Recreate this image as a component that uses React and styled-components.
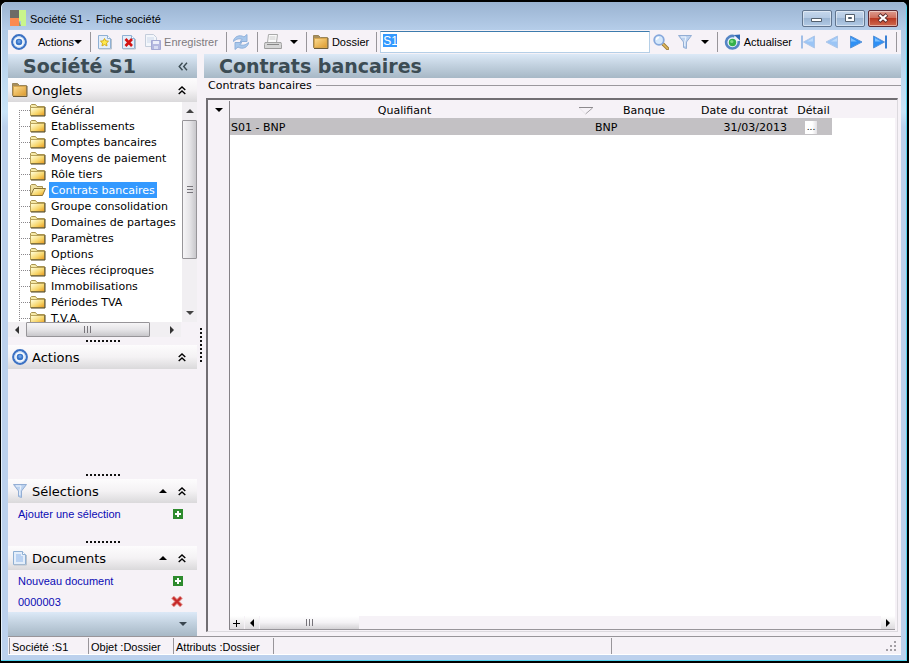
import { useState } from "react";
import styled, { createGlobalStyle } from "styled-components";

const GlobalStyle = createGlobalStyle`
    * {
        box-sizing: border-box;
    }

    body {
        margin: 0;
        background: #000;
        font-family: "Liberation Sans", Arial, sans-serif;
        font-size: 11px;
        color: #000;
    }

    button {
        margin: 0;
        padding: 0;
        border: 0;
        background: none;
        font: inherit;
        color: inherit;
    }

    svg {
        display: block;
        flex: none;
    }
`

const verdana = `"DejaVu Sans", Verdana, sans-serif`;

const tabs = [
    "Général",
    "Etablissements",
    "Comptes bancaires",
    "Moyens de paiement",
    "Rôle tiers",
    "Contrats bancaires",
    "Groupe consolidation",
    "Domaines de partages",
    "Paramètres",
    "Options",
    "Pièces réciproques",
    "Immobilisations",
    "Périodes TVA",
    "T.V.A.",
];

const contracts = [
    { label: "S01 - BNP", bank: "BNP", date: "31/03/2013" },
];

/* icons */

const AppIcon = () => (
    <svg width="17" height="17" viewBox="0 0 17 17">
        <path d="M0 0h9v8H0z" fill="#6d6b66" />
        <path d="M0 8h9v8H0z" fill="#fb8a4e" />
        <path d="M9 0h7v16h-5V11H9z" fill="#c9f58c" />
        <path d="M9 11l2 5H9z" fill="#8a9a70" />
    </svg>
);

const TargetIcon = () => (
    <svg width="16" height="16" viewBox="0 0 16 16">
        <circle cx="8" cy="8" r="6.800" fill="#fff" stroke="#3c72c4" strokeWidth="2.200" />
        <circle cx="8" cy="8" r="5.200" fill="none" stroke="#c4dbf5" />
        <circle cx="8" cy="8" r="3.300" fill="#3a76c8" />
        <circle cx="8" cy="7.400" r="1.600" fill="#6a9fe4" />
    </svg>
);

const FolderIcon = () => (
    <svg width="16" height="16" viewBox="0 0 16 16">
        <defs>
            <linearGradient id="folder" x1="0" y1="0" x2="1" y2="1">
                <stop offset="0" stopColor="#fbdc92" />
                <stop offset="1" stopColor="#dd9a2c" />
            </linearGradient>
        </defs>
        <path d="M.500 1.500h5l2 2h7v10H.500z" fill="#a98f5c" stroke="#9a8558" />
        <path d="M1.500 4.500h12.500v9H1.500z" fill="url(#folder)" stroke="#d9a850" />
        <path d="M15 4v10.500H1" fill="none" stroke="#6c5c3a" />
    </svg>
);

const TreeFolder = () => (
    <svg width="16" height="16" viewBox="0 0 16 16">
        <defs>
            <linearGradient id="tree" x1="0" y1="0" x2="1" y2="1">
                <stop offset="0.1" stopColor="#fffbd0" />
                <stop offset="0.6" stopColor="#f6d468" />
                <stop offset="1" stopColor="#e8961c" />
            </linearGradient>
        </defs>
        <path d="M.500 3.500l1-1h4l1.500 2h7.500v9H.500z" fill="#f5e9a8" stroke="#a8934f" />
        <path d="M.500 5.500h14v8H.500z" fill="url(#tree)" stroke="#b8a25a" />
        <path d="M15 5v9H1" fill="none" stroke="#4e421f" />
    </svg>
);

const TreeFolderOpen = () => (
    <svg width="16" height="16" viewBox="0 0 16 16">
        <path d="M.500 13.500v-10l1-1h4l1.500 2h5.500v3" fill="#efe0a0" stroke="#a8934f" />
        <path d="M.700 13.500L4 6.500h11.500l-3 7z" fill="url(#tree)" stroke="#8c7434" />
    </svg>
);

const PageShape = () => (
    <g transform="translate(1 0)">
        <path d="M.500 1.500h9l3 3v10H.500z" fill="#e4eefa" stroke="#8fb0d4" />
        <path d="M9.500 1.500v3h3" fill="#fff" stroke="#8fb0d4" />
        <path d="M1 15h12.500V5" fill="none" stroke="#b9c2cc" />
    </g>
);

const NewIcon = () => (
    <svg width="16" height="16" viewBox="0 0 16 16">
        <PageShape />
        <path d="M7.500 4.500l1.200 2.300 2.800.400-2 1.900.500 2.800-2.500-1.300L5 11.900l.500-2.800-2-1.900 2.800-.400z" fill="#ffe94a" stroke="#d3ab1c" />
    </svg>
);

const DeleteIcon = () => (
    <svg width="16" height="16" viewBox="0 0 16 16">
        <PageShape />
        <path d="M4.500 5l6.500 7M11 5l-6.500 7" stroke="#d31313" strokeWidth="2.600" />
    </svg>
);

const SaveIcon = () => (
    <svg width="16" height="16" viewBox="0 0 16 16">
        <path d="M.500.500h8l3 3v9H.500z" fill="#f3f6fb" stroke="#c4cddb" />
        <path d="M2 4h7M2 6h7M2 8h5" stroke="#ccd8ea" />
        <path d="M6.500 6.500h9v9h-9z" fill="#b4b8e0" stroke="#a4a9d4" />
        <path d="M8 7h6v3H8z" fill="#eceefa" />
        <path d="M9 12h4v3H9z" fill="#d8dcf2" />
    </svg>
);

const RefreshIcon = () => (
    <svg width="16" height="16" viewBox="0 0 16 16">
        <path d="M.500 7.500c0-4.500 6-7.500 10.500-4.500l3-2.500v7H7l2.300-2C6 4 3.500 5 .500 7.500z" fill="#a9c8ec" stroke="#90b0da" strokeLinejoin="round" />
        <path d="M15.500 8.500c0 4.500-6 7.500-10.500 4.500l-3 2.500v-7h7l-2.300 2c3.300 1.500 5.800.500 8.800-2z" fill="#a9c8ec" stroke="#90b0da" strokeLinejoin="round" />
    </svg>
);

const PrinterIcon = () => (
    <svg width="18" height="16" viewBox="0 0 18 16">
        <path d="M4.500.500h9l-1 8h-9z" fill="#fafafa" stroke="#aaa" />
        <path d="M5.500 3h6M5.500 5h6" stroke="#ccc" />
        <path d="M1 8.500h16l.500 2v4H.500v-4z" fill="#d6d6d6" stroke="#a2a2a2" />
        <path d="M3 10.500h12" stroke="#888" />
        <path d="M1 14.500h16" stroke="#9a9a9a" />
    </svg>
);

const SearchIcon = () => (
    <svg width="16" height="16" viewBox="0 0 16 16">
        <path d="M10 10l4.500 4.500" stroke="#9c7a38" strokeWidth="3.400" strokeLinecap="round" />
        <path d="M10 10l4.500 4.500" stroke="#e2bb5c" strokeWidth="1.600" strokeLinecap="round" />
        <circle cx="6" cy="6" r="4.800" fill="#d5e8fb" stroke="#86a8dc" strokeWidth="1.800" />
        <path d="M3.500 6a2.500 2.500 0 012.500-2.500" fill="none" stroke="#fff" strokeWidth="1.300" />
    </svg>
);

const FunnelIcon = () => (
    <svg width="16" height="16" viewBox="0 0 16 16">
        <path d="M1.500 1.500h13L9.500 8v6.500l-3-1V8z" fill="#bcd2ef" stroke="#93aed4" strokeLinejoin="round" />
        <path d="M4 3h5L7.800 8v4" fill="none" stroke="#f1f7ff" />
    </svg>
);

const ReloadIcon = () => (
    <svg width="17" height="16" viewBox="0 0 17 16">
        <path d="M10.500 2.300A6.300 6.300 0 1014.600 7" fill="#eaf2fb" stroke="#5585c4" strokeWidth="2.600" />
        <circle cx="8.500" cy="8.500" r="3.700" fill="#35b04a" />
        <circle cx="7.800" cy="7.500" r="1.600" fill="#7edb84" />
        <path d="M10 1l6-.500v6z" fill="#2f68b4" />
    </svg>
);

const NavIcon = ({ flip, bar, faded }) => (
    <svg width="16" height="16" viewBox="0 0 16 16">
        <g transform={flip ? "translate(16 0) scale(-1 1)" : undefined} opacity={faded ? 0.45 : 1}>
            <path d={bar ? "M1.500 2v12L12.500 8z" : "M2.500 2v12L14 8z"} fill="#2f90f5" stroke="#5a94d8" strokeLinejoin="round" />
            <path d="M3 4l6 3.500H3z" fill="#7cc0ff" />
            {bar && <path d="M14 1.500v13" stroke="#3a80d4" strokeWidth="2" />}
        </g>
    </svg>
);

const Triangle = ({ dir = "down", size = 8, fill = "#000" }) => {
    const turn = { down: 0, left: 90, up: 180, right: 270 }[dir];
    return (
        <svg width={size} height={size} viewBox="0 0 8 8">
            <path d="M0 2h8L4 6z" fill={fill} transform={`rotate(${turn} 4 4)`} />
        </svg>
    );
};

const DoubleUp = () => (
    <svg width="8" height="9" viewBox="0 0 8 9">
        <path d="M.700 4L4 1l3.300 3M.700 8L4 5l3.300 3" fill="none" stroke="#000" strokeWidth="1.400" />
    </svg>
);

const DoubleLeft = () => (
    <svg width="10" height="9" viewBox="0 0 10 9">
        <path d="M4.500.700L1.200 4.500l3.300 3.800M9 .700L5.700 4.500 9 8.300" fill="none" stroke="#3c4c54" strokeWidth="1.400" />
    </svg>
);

const DocIcon = () => (
    <svg width="16" height="16" viewBox="0 0 16 16">
        <PageShape />
        <path d="M4 5h5M4 7h7M4 9h7M4 11h7" stroke="#8fb6ea" />
    </svg>
);

const PlusIcon = () => (
    <svg width="10" height="10" viewBox="0 0 10 10">
        <path d="M0 0h10v10H0z" fill="#2e8b2e" />
        <path d="M5 2v6M2 5h6" stroke="#fff" strokeWidth="2" />
    </svg>
);

const CrossIcon = () => (
    <svg width="12" height="11" viewBox="0 0 12 11">
        <path d="M1.500 1l9 9M10.500 1l-9 9" stroke="#e39a96" strokeWidth="4" />
        <path d="M2 1.500l8 8M10 1.500l-8 8" stroke="#c62a2a" strokeWidth="2.400" />
    </svg>
);

const SortIcon = () => (
    <svg width="15" height="8" viewBox="0 0 15 8">
        <path d="M0 .500h14" stroke="#8d8a8e" />
        <path d="M6.500 7l7-6" fill="none" stroke="#a5a2a6" />
        <path d="M.500 1l6 6" fill="none" stroke="#e6e3e7" />
    </svg>
);

const ResizeIcon = () => (
    <svg width="10" height="10" viewBox="0 0 10 10">
        <path d="M8 0h2v2H8zM4 4h2v2H4zM8 4h2v2H8zM0 8h2v2H0zM4 8h2v2H4zM8 8h2v2H8z" fill="#a39fa5" />
    </svg>
);

const SidePanel = ({ icon, title, arrow, children }) => (
    <>
        <PanelHeader>
            {icon}
            <PanelTitle>{title}</PanelTitle>
            {arrow && <button aria-label={`Monter ${title}`}><Triangle dir="up" /></button>}
            <button aria-label={`Réduire ${title}`}><DoubleUp /></button>
        </PanelHeader>
        {children}
    </>
);

const App = () => {
    const [current, setCurrent] = useState("Contrats bancaires");
    const [search, setSearch] = useState("S1");

    const handleSelect = (e, name) => {
        e.preventDefault();
        setCurrent(name);
    }

    return (
        <Window>
            <GlobalStyle />
            <TitleBar>
                <AppIcon />
                <WindowTitle>{"Société S1 -  Fiche société"}</WindowTitle>
                <WindowButton aria-label="Réduire">
                    <svg width="12" height="12" viewBox="0 0 12 12"><path d="M.500 6.500h10v3H.500z" fill="#fff" stroke="#53606e" /></svg>
                </WindowButton>
                <WindowButton aria-label="Agrandir">
                    <svg width="12" height="12" viewBox="0 0 12 12"><path d="M1.500 2.500h9v7h-9z" fill="#fff" stroke="#53606e" /><path d="M4.500 5.500h3v1h-3z" fill="#a9c0da" stroke="#53606e" /></svg>
                </WindowButton>
                <WindowButton $close aria-label="Fermer">
                    <svg width="12" height="12" viewBox="0 0 12 12"><path d="M2 2.500l8 7M10 2.500l-8 7" stroke="#5b2b2b" strokeWidth="4" /><path d="M2.500 3l7 6M9.500 3l-7 6" stroke="#fff" strokeWidth="2.200" /></svg>
                </WindowButton>
            </TitleBar>

            <Toolbar>
                <ToolButton $gap="11px">
                    <TargetIcon />
                    <WithArrow>Actions<Triangle /></WithArrow>
                </ToolButton>
                <Separator />
                <ToolGroup>
                    <ToolButton aria-label="Nouveau"><NewIcon /></ToolButton>
                    <ToolButton aria-label="Supprimer"><DeleteIcon /></ToolButton>
                    <ToolButton disabled><SaveIcon />Enregistrer</ToolButton>
                </ToolGroup>
                <Separator />
                <ToolButton aria-label="Rafraîchir"><RefreshIcon /></ToolButton>
                <Separator />
                <ToolGroup>
                    <ToolButton aria-label="Imprimer"><PrinterIcon /></ToolButton>
                    <ToolButton aria-label="Options d'impression"><Triangle /></ToolButton>
                </ToolGroup>
                <Separator />
                <ToolButton><FolderIcon />Dossier</ToolButton>
                <Separator $tight />
                <SearchInput>
                    <Selection $on={search === "S1"} />
                    <input aria-label="Recherche" value={search} onChange={(e) => { setSearch(e.target.value) }} />
                </SearchInput>
                <ToolGroup>
                    <ToolButton aria-label="Rechercher"><SearchIcon /></ToolButton>
                    <ToolButton aria-label="Filtrer"><FunnelIcon /></ToolButton>
                    <ToolButton aria-label="Options de filtre"><Triangle /></ToolButton>
                </ToolGroup>
                <Separator />
                <ToolGroup>
                    <ToolButton><ReloadIcon />Actualiser</ToolButton>
                    <ToolButton aria-label="Premier"><NavIcon flip bar faded /></ToolButton>
                    <ToolButton aria-label="Précédent"><NavIcon flip faded /></ToolButton>
                    <ToolButton aria-label="Suivant"><NavIcon /></ToolButton>
                    <ToolButton aria-label="Dernier"><NavIcon bar /></ToolButton>
                </ToolGroup>
                <Separator />
            </Toolbar>

            <Body>
                <Sidebar>
                    <Heading>
                        <h1>Société S1</h1>
                        <button aria-label="Replier"><DoubleLeft /></button>
                    </Heading>
                    <SidePanel icon={<FolderIcon />} title="Onglets">
                        <TreeArea>
                            <Tree>
                                {tabs.map((name) => (
                                    <TreeRow
                                        key={name}
                                        href="#"
                                        $active={name === current}
                                        onClick={(e) => { handleSelect(e, name) }}
                                    >
                                        {name === current ? <TreeFolderOpen /> : <TreeFolder />}
                                        <span>{name}</span>
                                    </TreeRow>
                                ))}
                            </Tree>
                            <VScroll>
                                <button aria-label="Haut"><Triangle dir="up" fill="#444" /></button>
                                <VThumb><Ridges /></VThumb>
                                <button aria-label="Bas"><Triangle fill="#444" /></button>
                            </VScroll>
                        </TreeArea>
                        <HScroll>
                            <button aria-label="Gauche"><Triangle dir="left" fill="#333" /></button>
                            <HThumb><Ridges $vertical /></HThumb>
                            <button aria-label="Droite"><Triangle dir="right" fill="#333" /></button>
                        </HScroll>
                    </SidePanel>
                    <Grip><Dots /></Grip>
                    <SidePanel icon={<TargetIcon />} title="Actions">
                        <Filler />
                    </SidePanel>
                    <Grip><Dots /></Grip>
                    <SidePanel icon={<FunnelIcon />} title="Sélections" arrow>
                        <LinkList $space="14px">
                            <LinkRow>
                                <a href="#">Ajouter une sélection</a>
                                <button aria-label="Ajouter une sélection"><PlusIcon /></button>
                            </LinkRow>
                        </LinkList>
                    </SidePanel>
                    <Grip><Dots /></Grip>
                    <SidePanel icon={<DocIcon />} title="Documents" arrow>
                        <LinkList>
                            <LinkRow>
                                <a href="#">Nouveau document</a>
                                <button aria-label="Nouveau document"><PlusIcon /></button>
                            </LinkRow>
                            <LinkRow>
                                <a href="#">0000003</a>
                                <button aria-label="Supprimer 0000003"><CrossIcon /></button>
                            </LinkRow>
                        </LinkList>
                    </SidePanel>
                    <SideFooter>
                        <button aria-label="Plus de panneaux"><Triangle fill="#3a4650" /></button>
                    </SideFooter>
                </Sidebar>

                <Splitter><Dots $vertical /></Splitter>

                <Main>
                    <Heading>
                        <h1>Contrats bancaires</h1>
                    </Heading>
                    <Legend>Contrats bancaires</Legend>
                    <Frame>
                        <Gutter>
                            <button aria-label="Menu de la grille"><Triangle /></button>
                        </Gutter>
                        <GridArea>
                            <Grid>
                                <colgroup>
                                    <col width="364" />
                                    <col width="100" />
                                    <col width="101" />
                                    <col width="37" />
                                    <col />
                                </colgroup>
                                <thead>
                                    <tr>
                                        <th><SortHead><span>Qualifiant</span><SortIcon /></SortHead></th>
                                        <th>Banque</th>
                                        <th>Date du contrat</th>
                                        <th>Détail</th>
                                        <th />
                                    </tr>
                                </thead>
                                <tbody>
                                    {contracts.map((row) => (
                                        <tr key={row.label}>
                                            <td>{row.label}</td>
                                            <td>{row.bank}</td>
                                            <DateCell>{row.date}</DateCell>
                                            <td><DetailButton aria-label="Détail">...</DetailButton></td>
                                            <td />
                                        </tr>
                                    ))}
                                </tbody>
                            </Grid>
                            <Empty />
                            <GridScroll>
                                <ScrollButton aria-label="Ajouter">
                                    <svg width="8" height="8" viewBox="0 0 8 8"><path d="M3.500 1v7M0 4.500h7" stroke="#000" /></svg>
                                </ScrollButton>
                                <ScrollButton aria-label="Défiler à gauche"><Triangle dir="left" /></ScrollButton>
                                <GridThumb><Ridges $vertical /></GridThumb>
                                <Filler />
                                <ScrollButton aria-label="Défiler à droite"><Triangle dir="right" /></ScrollButton>
                            </GridScroll>
                        </GridArea>
                    </Frame>
                </Main>
            </Body>

            <StatusBar>
                <StatusCell $width="79px">Société :S1</StatusCell>
                <StatusCell $width="85px">Objet :Dossier</StatusCell>
                <StatusCell $width="100px">Attributs :Dossier</StatusCell>
                <StatusCell $width="338px" />
                <StatusCell />
                <ResizeIcon />
            </StatusBar>
        </Window>
    )
};

const headerGradient = `linear-gradient(#dce9f7, #c3d2e0 45%, #a7b8c6)`;

const Window = styled.div`
    min-height: 100vh;
    display: flex;
    flex-direction: column;
    padding: 0 6px 6px 6px;
    background: linear-gradient(#a9c1df, #c9e4f8 110px, #bcd1ed 125px);
    border: 2px solid #000;
    border-left-width: 1px;
    border-radius: 7px 7px 0 0;
    box-shadow: inset -1px -1px 0 #52d3ee, inset 1px 1px 0 #e6f1fb;
`

const TitleBar = styled.header`
    height: 28px;
    display: flex;
    align-items: center;
    gap: 3px;
    margin: 0 -5px;
    padding: 4px 8px 0 8px;
    background: linear-gradient(#9ab3d1, #b5cde9);
    border-radius: 5px 5px 0 0;
`

const WindowTitle = styled.span`
    flex: 1;
    padding-top: 1px;
    font-size: 11px;
    white-space: pre;
`

const WindowButton = styled.button`
    width: 30px;
    height: 17px;
    display: flex;
    align-items: center;
    justify-content: center;
    border: 1px solid ${props => props.$close ? "#5c2b35" : "#61758f"};
    border-radius: 2px;
    background: ${props => props.$close ?
        "linear-gradient(#dd9c90, #cf6b58 48%, #b93a24 50%, #cf6a50)" :
        "linear-gradient(#c5d7ec, #b3c9e3 48%, #9bb5d3 50%, #b2cae5)"};
    box-shadow: inset 0 0 0 1px rgba(255, 255, 255, 0.45);
`

const Toolbar = styled.div`
    height: 24px;
    display: flex;
    align-items: center;
    margin-left: 1px;
    padding-left: 3px;
    background: #f6f2f7;
`

const ToolGroup = styled.div`
    display: flex;
    align-items: center;
    gap: 8px;
`

const ToolButton = styled.button`
    display: flex;
    align-items: center;
    gap: ${props => props.$gap || "3px"};
    white-space: nowrap;

    &:disabled {
        color: #7d7a7e;
    }
`

const WithArrow = styled.span`
    display: flex;
    align-items: center;
`

const Separator = styled.span`
    width: 1px;
    height: 20px;
    flex: none;
    margin: 0 ${props => props.$tight ? "3px" : "6px"} 0 ${props => props.$tight ? "7px" : "8px"};
    background: #98959a;

    &:last-child {
        margin-right: 4px;
    }
`

const SearchInput = styled.label`
    position: relative;
    flex: 1;
    min-width: 60px;
    height: 22px;
    display: flex;
    margin-right: 3px;
    background: #fff;
    border: 1px solid #b5cfe7;
    border-top-color: #3d7bad;

    input {
        position: relative;
        width: 100%;
        height: 17px;
        padding: 0 2px;
        border: 0;
        outline: 0;
        background: transparent;
        font-family: inherit;
        font-size: 12px;
        color: #fff;
    }
`

const Selection = styled.span`
    position: absolute;
    left: 2px;
    top: 2px;
    width: 14px;
    height: 13px;
    background: ${props => props.$on ? "#3399ff" : "transparent"};
`

const Body = styled.div`
    flex: 1;
    display: flex;
    margin-left: 1px;
    background: #f6f2f7;
`

const Sidebar = styled.aside`
    width: 189px;
    flex: none;
    display: flex;
    flex-direction: column;
`

const Heading = styled.div`
    height: 24px;
    flex: none;
    display: flex;
    align-items: center;
    justify-content: space-between;
    padding: 0 9px 0 15px;
    background: ${headerGradient};
    color: #3c4c54;

    h1 {
        margin: 0;
        font-family: ${verdana};
        font-size: 19px;
        line-height: 24px;
        font-weight: bold;
        white-space: nowrap;
    }
`

const PanelHeader = styled.div`
    height: 24px;
    flex: none;
    display: flex;
    align-items: center;
    gap: 11px;
    padding: 0 11px 0 4px;
    background: linear-gradient(#fdfcfd, #f4f2f4 50%, #dad9db);
`

const PanelTitle = styled.h2`
    flex: 1;
    margin: 0 0 0 -7px;
    font-family: ${verdana};
    font-size: 13px;
    font-weight: normal;
`

const TreeArea = styled.div`
    height: 220px;
    flex: none;
    display: flex;
    background: #fff;
`

const Tree = styled.nav`
    flex: 1;
    min-width: 0;
    overflow: hidden;
    padding-left: 11px;
`

const TreeRow = styled.a`
    height: 16px;
    display: flex;
    align-items: center;
    font-family: ${verdana};
    font-size: 11px;
    color: #000;
    text-decoration: none;
    white-space: nowrap;
    background: repeating-linear-gradient(#8a878b 0 1px, transparent 1px 2px) 0 0 / 1px 16px no-repeat,
        repeating-linear-gradient(90deg, #8a878b 0 1px, transparent 1px 2px) 0 8px / 11px 1px no-repeat;

    &:first-child {
        background: repeating-linear-gradient(#8a878b 0 1px, transparent 1px 2px) 0 8px / 1px 8px no-repeat,
            repeating-linear-gradient(90deg, #8a878b 0 1px, transparent 1px 2px) 0 8px / 11px 1px no-repeat;
    }

    svg {
        margin: 0 3px 0 11px;
    }

    span {
        height: 16px;
        padding: 0 2px;
        line-height: 18px;
        color: ${props => props.$active ? "#fff" : "#000"};
        background: ${props => props.$active ? "#3399ff" : "transparent"};
    }
`

const VScroll = styled.div`
    width: 15px;
    display: flex;
    flex-direction: column;
    background: #f1eff2;

    button {
        height: 18px;
        display: flex;
        align-items: center;
        justify-content: center;
    }
`

const VThumb = styled.div`
    height: 139px;
    display: flex;
    align-items: center;
    justify-content: center;
    margin-bottom: auto;
    border: 1px solid #979599;
    border-radius: 1px;
    background: linear-gradient(90deg, #f6f5f7, #e6e5e8 50%, #c8c7cb);
`

const HScroll = styled.div`
    height: 15px;
    flex: none;
    display: flex;
    margin-right: 16px;
    background: #f1eff2;

    button {
        width: 18px;
        display: flex;
        align-items: center;
        justify-content: center;
    }
`

const HThumb = styled.div`
    width: 124px;
    display: flex;
    align-items: center;
    justify-content: center;
    margin-right: auto;
    border: 1px solid #979599;
    border-radius: 1px;
    background: linear-gradient(#f6f5f7, #e6e5e8 50%, #c8c7cb);
`

const Ridges = styled.span`
    width: ${props => props.$vertical ? "8px" : "6px"};
    height: ${props => props.$vertical ? "7px" : "8px"};
    background: repeating-linear-gradient(${props => props.$vertical ? "90deg" : "180deg"}, #77747a 0 1px, transparent 1px 3px);
`

const Grip = styled.div`
    height: 8px;
    flex: none;
    display: flex;
    align-items: center;
    justify-content: center;
`

const Dots = styled.span`
    width: ${props => props.$vertical ? "2px" : "34px"};
    height: ${props => props.$vertical ? "34px" : "2px"};
    background: repeating-linear-gradient(${props => props.$vertical ? "180deg" : "90deg"}, #111 0 2px, transparent 2px 4px);
`

const Filler = styled.div`
    flex: 1;
`

const LinkList = styled.div`
    flex: none;
    padding-bottom: ${props => props.$space || "0"};
`

const LinkRow = styled.div`
    height: 21px;
    display: flex;
    align-items: center;
    justify-content: space-between;
    padding: 0 14px 0 10px;

    a {
        color: #0b0bb4;
        text-decoration: none;
    }
`

const SideFooter = styled.div`
    height: 24px;
    flex: none;
    display: flex;
    align-items: center;
    justify-content: flex-end;
    padding-right: 10px;
    background: ${headerGradient};
`

const Splitter = styled.div`
    width: 7px;
    flex: none;
    display: flex;
    align-items: center;
    justify-content: center;
`

const Main = styled.main`
    flex: 1;
    min-width: 0;
    display: flex;
    flex-direction: column;
`

const Legend = styled.div`
    height: 20px;
    flex: none;
    display: flex;
    gap: 4px;
    padding-left: 4px;
    font-family: ${verdana};
    font-size: 11px;
    line-height: 16px;

    &::after {
        content: "";
        flex: 1;
        height: 7px;
        border-bottom: 1px solid #9b989d;
    }
`

const Frame = styled.div`
    flex: 1;
    display: flex;
    margin: 0 3px 4px 2px;
    padding: 1px 2px 1px 1px;
    border: 1px solid #dcd9de;
    border-top: 2px solid #716e73;
    border-left: 2px solid #716e73;
`

const Gutter = styled.div`
    width: 20px;
    flex: none;
    display: flex;
    align-items: flex-start;
    justify-content: center;
    padding-top: 5px;
`

const GridArea = styled.div`
    flex: 1;
    min-width: 0;
    display: flex;
    flex-direction: column;
    border-left: 1px solid #858287;
    border-bottom: 1px solid #98959a;
`

const Grid = styled.table`
    width: 100%;
    table-layout: fixed;
    border-collapse: collapse;
    font-family: ${verdana};
    font-size: 11px;
    line-height: 15px;
    white-space: nowrap;

    th, td {
        height: 17px;
        padding: 2px 0 0 0;
        font-weight: normal;
        text-align: left;
    }

    th {
        text-align: center;
    }

    td {
        padding-left: 1px;
        background: #c3c1c4;
    }

    td:last-child {
        background: #fff;
    }
`

const SortHead = styled.span`
    display: flex;
    align-items: center;

    span {
        flex: 1;
    }
`

const DateCell = styled.td`
    && {
        padding-right: 8px;
        text-align: right;
    }
`

const DetailButton = styled.button`
    width: 12px;
    height: 13px;
    display: block;
    margin-left: 9px;
    background: linear-gradient(90deg, #fff 60%, #e2e0e3);
    font-size: 9px;
    line-height: 11px;
`

const Empty = styled.div`
    flex: 1;
    background: #fff;
`

const GridScroll = styled.div`
    height: 13px;
    flex: none;
    display: flex;
    gap: 1px;
`

const ScrollButton = styled.button`
    width: 14px;
    flex: none;
    display: flex;
    align-items: center;
    justify-content: center;
    background: linear-gradient(#fff, #dddbde);
`

const GridThumb = styled.div`
    width: 99px;
    display: flex;
    align-items: center;
    justify-content: center;
    background: linear-gradient(#fff, #f4f2f5 50%, #d4d2d5);
`

const StatusBar = styled.footer`
    height: 19px;
    flex: none;
    display: flex;
    align-items: center;
    margin-left: 1px;
    padding: 1px 5px 1px 1px;
    background: #f6f2f7;
    border-top: 1px solid #98959a;
    border-bottom: 1px solid #fff;
`

const StatusCell = styled.div`
    height: 16px;
    flex: ${props => props.$width ? "none" : "1"};
    width: ${props => props.$width || "auto"};
    padding-left: 2px;
    border-left: 1px solid #98959a;
    line-height: 18px;
    white-space: nowrap;
`

export default App
